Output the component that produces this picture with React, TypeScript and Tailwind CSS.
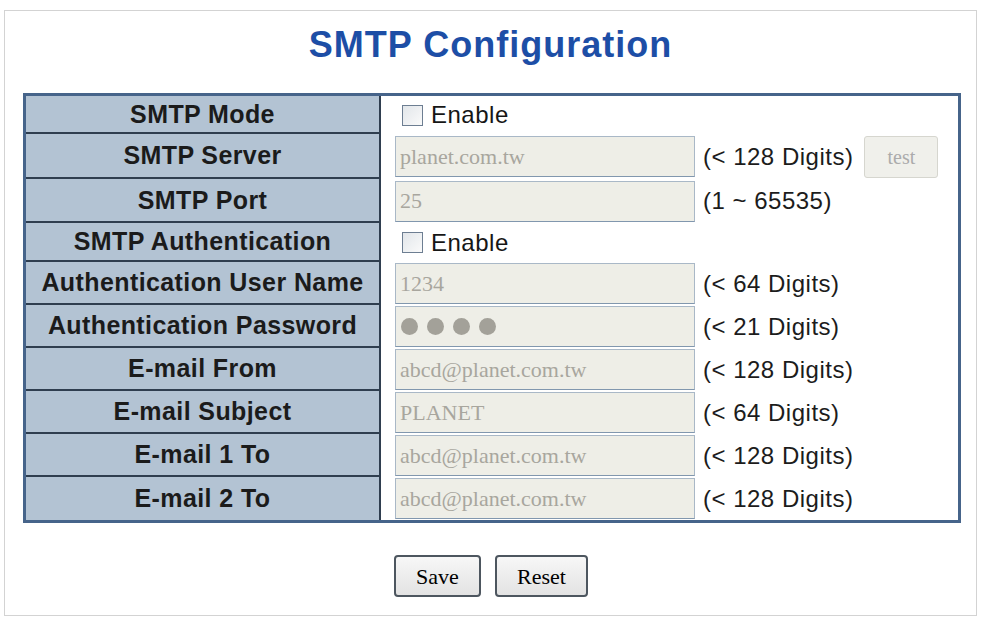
import React from 'react';

type Row =
  | { label: string; kind: 'check'; h: string }
  | { label: string; kind: 'text' | 'password'; value: string; hint: string; h: string; test?: boolean };

const rows: Row[] = [
  { label: 'SMTP Mode', kind: 'check', h: 'h-[38px]' },
  { label: 'SMTP Server', kind: 'text', value: 'planet.com.tw', hint: '(< 128 Digits)', h: 'h-[45px]', test: true },
  { label: 'SMTP Port', kind: 'text', value: '25', hint: '(1 ~ 65535)', h: 'h-[44px]' },
  { label: 'SMTP Authentication', kind: 'check', h: 'h-[39px]' },
  { label: 'Authentication User Name', kind: 'text', value: '1234', hint: '(< 64 Digits)', h: 'h-[43px]' },
  { label: 'Authentication Password', kind: 'password', value: '', hint: '(< 21 Digits)', h: 'h-[43px]' },
  { label: 'E-mail From', kind: 'text', value: 'abcd@planet.com.tw', hint: '(< 128 Digits)', h: 'h-[43px]' },
  { label: 'E-mail Subject', kind: 'text', value: 'PLANET', hint: '(< 64 Digits)', h: 'h-[43px]' },
  { label: 'E-mail 1 To', kind: 'text', value: 'abcd@planet.com.tw', hint: '(< 128 Digits)', h: 'h-[43px]' },
  { label: 'E-mail 2 To', kind: 'text', value: 'abcd@planet.com.tw', hint: '(< 128 Digits)', h: 'h-[43px]' },
];

const sans = "font-['Liberation_Sans',Arial,sans-serif]";
const serif = "font-['Liberation_Serif','Times_New_Roman',serif]";

function Checkbox() {
  return (
    <div className="ml-[7px] flex items-center">
      <span className="h-[21px] w-[21px] border border-[#6d7e92] bg-gradient-to-br from-[#e2e6ea] to-[#fafafa]" />
      <span className={`${sans} ml-[8px] text-[24px] leading-none tracking-[0.5px] text-[#161616]`}>Enable</span>
    </div>
  );
}

function Field({ row }: { row: Extract<Row, { kind: 'text' | 'password' }> }) {
  return (
    <div className="flex items-center">
      <div className="flex h-[41px] w-[300px] items-center border border-[#a9b8c7] border-b-[#8197ae] bg-[#eeeee7] pl-[4px]">
        {row.kind === 'password' ? (
          <div className="flex gap-[9px] pl-[1px]">
            {[0, 1, 2, 3].map((i) => (
              <span key={i} className="h-[17px] w-[17px] rounded-full bg-[#a3a199]" />
            ))}
          </div>
        ) : (
          <span className={`${serif} text-[22px] leading-none text-[#a8a69e]`}>{row.value}</span>
        )}
      </div>
      <span className={`${sans} ml-[8px] text-[24px] leading-none tracking-[0.5px] text-[#1c1c1c]`}>{row.hint}</span>
      {row.test && (
        <div
          className={`${serif} ml-[11px] flex h-[42px] w-[74px] items-center justify-center rounded-[3px] border border-[#d6d6cf] bg-[#f0f0eb] text-[20px] text-[#ababab]`}
        >
          test
        </div>
      )}
    </div>
  );
}

export default function App() {
  return (
    <div className="h-[618px] w-[981px] overflow-hidden bg-white">
      <div className="ml-[4px] mt-[10px] h-[606px] w-[973px] border border-[#d3d3d3] bg-white">
        <div className="flex h-[67px] items-center justify-center">
          <h1 className={`${sans} text-[36px] font-bold leading-none tracking-[1px] text-[#1d4ea6]`}>
            SMTP Configuration
          </h1>
        </div>

        <div className="ml-[18px] mt-[15px] w-[938px] border-[3px] border-[#46648a]">
          {rows.map((row, i) => (
            <div key={row.label} className={`flex ${row.h}`}>
              <div
                className={`flex w-[353px] items-center justify-center bg-[#b3c3d3] ${
                  i < rows.length - 1 ? 'border-b-2 border-[#2f3e4f]' : ''
                }`}
              >
                <span className={`${sans} text-[25px] font-bold leading-none tracking-[0.4px] text-[#1b1b1b]`}>
                  {row.label}
                </span>
              </div>
              <div className="flex flex-1 items-center border-l-2 border-[#2f3e4f] bg-white pl-[14px]">
                {row.kind === 'check' ? <Checkbox /> : <Field row={row} />}
              </div>
            </div>
          ))}
        </div>

        <div className="mt-[32px] flex justify-center gap-[14px] pl-[1px]">
          <button
            className={`${serif} h-[42px] w-[87px] rounded-[4px] border-2 border-[#4d565f] bg-gradient-to-b from-[#f7f7f7] to-[#e3e3e3] text-[22px] text-black`}
          >
            Save
          </button>
          <button
            className={`${serif} h-[42px] w-[93px] rounded-[4px] border-2 border-[#4d565f] bg-gradient-to-b from-[#f7f7f7] to-[#e3e3e3] text-[22px] text-black`}
          >
            Reset
          </button>
        </div>
      </div>
    </div>
  );
}
